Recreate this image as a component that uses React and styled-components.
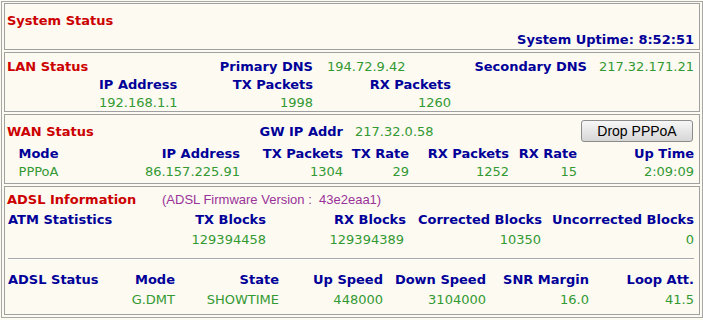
import styled, { createGlobalStyle } from "styled-components";

const GlobalStyle = createGlobalStyle`
  html, body {
    margin: 0;
    padding: 0;
    background: #fdfaf1;
  }
  body {
    font-family: "DejaVu Sans", Verdana, sans-serif;
    font-size: 13px;
  }
`;

const Frame = styled.div`
  margin: 1px 0 0 1px;
  width: 702px;
  box-sizing: border-box;
  border: 1px solid #a7a7a7;
  padding: 1px 2px 2px 2px;
  display: flex;
  flex-direction: column;
  gap: 2px;
`;

const Section = styled.section`
  border: 1px solid #a0a0a0;
  padding: ${(p) => p.$pad || "2px 5px 2px 2px"};
  display: flex;
  flex-direction: column;
`;

const Row = styled.div`
  display: grid;
  grid-template-columns: ${(p) => p.$cols};
  height: ${(p) => p.$h || 18}px;
  margin-top: ${(p) => p.$mt || 0}px;
  align-items: center;
  white-space: nowrap;
`;

const tones = {
  title: "color: #cc0000; font-weight: bold;",
  label: "color: #000099; font-weight: bold;",
  value: "color: #339933;",
};

const Cell = styled.div`
  ${(p) => tones[p.$tone || "label"]}
  text-align: ${(p) => p.$align || "right"};
  padding-left: ${(p) => p.$pl || 0}px;
  padding-right: ${(p) => p.$pr || 0}px;
`;

const Firmware = styled.div`
  font-family: "Liberation Sans", Arial, sans-serif;
  font-size: 13px;
  color: #993399;
  white-space: pre;
`;

const DropButton = styled.button`
  justify-self: end;
  margin-right: 1px;
  width: 112px;
  height: 22px;
  padding: 0;
  border: 1px solid #8c8c8c;
  border-radius: 3px;
  background: linear-gradient(#f7f7f7, #e6e6e6 50%, #d6d6d6);
  font-family: "Liberation Sans", Arial, sans-serif;
  font-size: 14px;
  color: #000;
`;

const Rule = styled.div`
  align-self: center;
  margin-left: 1px;
  border-top: 1px solid #a8a8a8;
  border-bottom: 1px solid #ffffff;
  grid-column: 1 / -1;
`;

const lanTop = "88px 218px 147px 127px 107px";
const lanCols = "92px 90px 124px 138px 1fr";
const wanTop = "100px 236px 1fr 112px";
const wanCols = "63px 170px 103px 66px 100px 68px 117px";
const atmCols = "150px 109px 140px 136px 152px";
const adslCols = "98px 70px 104px 104px 103px 103px 105px";

const wan = [
  ["Mode", "PPPoA", "center"],
  ["IP Address", "86.157.225.91"],
  ["TX Packets", "1304"],
  ["TX Rate", "29"],
  ["RX Packets", "1252"],
  ["RX Rate", "15"],
  ["Up Time", "2:09:09"],
];

const atm = [
  ["TX Blocks", "129394458", 0],
  ["RX Blocks", "129394389", 2],
  ["Corrected Blocks", "10350", 1],
  ["Uncorrected Blocks", "0", 0],
];

const adsl = [
  ["Mode", "G.DMT"],
  ["State", "SHOWTIME"],
  ["Up Speed", "448000"],
  ["Down Speed", "3104000"],
  ["SNR Margin", "16.0"],
  ["Loop Att.", "41.5"],
];

export default function App() {
  return (
    <>
      <GlobalStyle />
      <Frame>
        <Section $pad="7px 5px 0 2px">
          <Row $cols="1fr" $h={19}>
            <Cell $tone="title" $align="left">System Status</Cell>
          </Row>
          <Row $cols="1fr" $h={19}>
            <Cell>System Uptime: 8:52:51</Cell>
          </Row>
        </Section>

        <Section $pad="4px 5px 0 2px">
          <Row $cols={lanTop}>
            <Cell $tone="title" $align="left">LAN Status</Cell>
            <Cell>Primary DNS</Cell>
            <Cell $tone="value" $align="left" $pl={14}>194.72.9.42</Cell>
            <Cell>Secondary DNS</Cell>
            <Cell $tone="value">217.32.171.21</Cell>
          </Row>
          <Row $cols={lanCols}>
            <span />
            <Cell $align="left">IP Address</Cell>
            <Cell>TX Packets</Cell>
            <Cell>RX Packets</Cell>
          </Row>
          <Row $cols={lanCols}>
            <span />
            <Cell $tone="value" $align="left">192.168.1.1</Cell>
            <Cell $tone="value">1998</Cell>
            <Cell $tone="value">1260</Cell>
          </Row>
        </Section>

        <Section $pad="5px 5px 3px 2px">
          <Row $cols={wanTop} $h={22}>
            <Cell $tone="title" $align="left">WAN Status</Cell>
            <Cell>GW IP Addr</Cell>
            <Cell $tone="value" $align="left" $pl={12}>217.32.0.58</Cell>
            <DropButton>Drop PPPoA</DropButton>
          </Row>
          <Row $cols={wanCols} $mt={2}>
            {wan.map(([label, , align]) => (
              <Cell key={label} $align={align}>{label}</Cell>
            ))}
          </Row>
          <Row $cols={wanCols}>
            {wan.map(([label, value, align]) => (
              <Cell key={label} $tone="value" $align={align}>{value}</Cell>
            ))}
          </Row>
        </Section>

        <Section $pad="2px 5px 5px 2px">
          <Row $cols="155px 1fr" $h={20}>
            <Cell $tone="title" $align="left">ADSL Information</Cell>
            <Firmware>(ADSL Firmware Version :  43e2eaa1)</Firmware>
          </Row>
          <Row $cols={atmCols} $h={20}>
            <Cell $align="left" $pl={1}>ATM Statistics</Cell>
            {atm.map(([label]) => (
              <Cell key={label}>{label}</Cell>
            ))}
          </Row>
          <Row $cols={atmCols} $h={20}>
            <span />
            {atm.map(([label, value, pr]) => (
              <Cell key={label} $tone="value" $pr={pr}>{value}</Cell>
            ))}
          </Row>
          <Row $cols="1fr" $h={20}>
            <Rule />
          </Row>
          <Row $cols={adslCols} $h={20}>
            <Cell $align="left" $pl={1}>ADSL Status</Cell>
            {adsl.map(([label]) => (
              <Cell key={label}>{label}</Cell>
            ))}
          </Row>
          <Row $cols={adslCols} $h={20}>
            <span />
            {adsl.map(([label, value]) => (
              <Cell key={label} $tone="value">{value}</Cell>
            ))}
          </Row>
        </Section>
      </Frame>
    </>
  );
}
